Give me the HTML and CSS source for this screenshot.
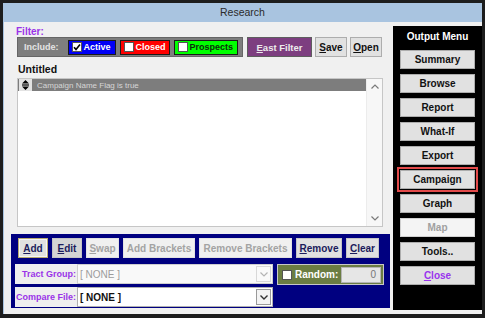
FILE: index.html
```html
<!DOCTYPE html>
<html lang="en">
<head>
    <meta charset="UTF-8">
    <meta name="viewport" content="width=device-width, initial-scale=1.0">
    <title>Research</title>
    <link rel="stylesheet" href="styles.css">
</head>
<body>
    <div class="window">
        <div class="titlebar">Research</div>

        <div class="frame">
            <div class="main">
                <div class="filter-label">Filter:</div>

                <div class="filter-row">
                    <div class="include">
                        <span class="include-label">Include:</span>
                        <span class="chip chip-active">
                            <span class="box">
                                <svg width="8" height="8" viewBox="0 0 8 8"><path d="M1 4.2 L3 6.4 L7 1.4" fill="none" stroke="#000" stroke-width="1.6"/></svg>
                            </span>Active
                        </span>
                        <span class="chip chip-closed"><span class="box"></span>Closed</span>
                        <span class="chip chip-prospects"><span class="box"></span>Prospects</span>
                    </div>
                    <button class="btn btn-fast"><u>E</u>ast Filter</button>
                    <button class="btn btn-small"><u>S</u>ave</button>
                    <button class="btn btn-small"><u>O</u>pen</button>
                </div>

                <div class="query-title">Untitled</div>

                <div class="query-list">
                    <div class="query-rows">
                        <div class="query-row">
                            <span class="move-icon">
                                <svg width="7" height="10" viewBox="0 0 7 10"><path d="M3.5 0 L7 3.5 L0 3.5 Z M0 6.5 L7 6.5 L3.5 10 Z" fill="#000"/><rect x="0" y="4.4" width="7" height="1.2" fill="#000"/></svg>
                            </span>
                            Campaign Name Flag is true
                        </div>
                    </div>
                    <div class="scrollbar">
                        <span class="scroll-btn">
                            <svg width="8" height="5" viewBox="0 0 8 5"><path d="M0.5 4.5 L4 1 L7.5 4.5" fill="none" stroke="#7a7a7a" stroke-width="1.2"/></svg>
                        </span>
                        <span class="scroll-btn">
                            <svg width="8" height="5" viewBox="0 0 8 5"><path d="M0.5 0.5 L4 4 L7.5 0.5" fill="none" stroke="#7a7a7a" stroke-width="1.2"/></svg>
                        </span>
                    </div>
                </div>

                <div class="toolbar">
                    <div class="tool-row">
                        <button class="tool-btn focused w-add"><u>A</u>dd</button>
                        <button class="tool-btn hot w-edit"><u>E</u>dit</button>
                        <button class="tool-btn off w-swap"><u>S</u>wap</button>
                        <button class="tool-btn off w-addb">Add Brackets</button>
                        <button class="tool-btn off w-remb">Remove Brackets</button>
                        <button class="tool-btn w-remove"><u>R</u>emove</button>
                        <button class="tool-btn w-clear"><u>C</u>lear</button>
                    </div>

                    <div class="combo-line">
                        <div class="combo">
                            <label>Tract Group:</label>
                            <div class="select">
                                <span class="select-text">[ NONE ]</span>
                                <span class="arrow">
                                    <svg width="8" height="5" viewBox="0 0 8 5"><path d="M0.5 0.5 L4 4 L7.5 0.5" fill="none" stroke="#b4b4b4" stroke-width="1.2"/></svg>
                                </span>
                            </div>
                        </div>
                        <div class="random">
                            <span class="box"></span>
                            <span>Random:</span>
                            <span class="random-input">0</span>
                        </div>
                    </div>

                    <div class="combo-line last">
                        <div class="combo">
                            <label>Compare File:</label>
                            <div class="select enabled">
                                <span class="select-text">[ NONE ]</span>
                                <span class="arrow">
                                    <svg width="8" height="5" viewBox="0 0 8 5"><path d="M0.5 0.5 L4 4 L7.5 0.5" fill="none" stroke="#333" stroke-width="1.4"/></svg>
                                </span>
                            </div>
                        </div>
                    </div>
                </div>
            </div>

            <div class="output-menu">
                <div class="menu-title">Output Menu</div>
                <div class="menu-list">
                    <button class="menu-btn">Summary</button>
                    <button class="menu-btn">Browse</button>
                    <button class="menu-btn">Report</button>
                    <button class="menu-btn">What-If</button>
                    <button class="menu-btn">Export</button>
                    <button class="menu-btn current">Campaign</button>
                    <button class="menu-btn">Graph</button>
                    <button class="menu-btn off">Map</button>
                    <button class="menu-btn">Tools..</button>
                    <button class="menu-btn close"><u>C</u>lose</button>
                </div>
            </div>
        </div>
    </div>
</body>
</html>
```

FILE: styles.css
```css
* {
    margin: 0;
    padding: 0;
    box-sizing: border-box;
}

body {
    width: 485px;
    height: 318px;
    overflow: hidden;
    background: #1d1d1d;
    font-family: "Liberation Sans", Arial, sans-serif;
}

button {
    font-family: inherit;
    font-weight: bold;
    font-size: 10px;
    cursor: pointer;
}

.window {
    margin: 3px 3px 0;
    height: 311px;
    background: #f0f0f0;
    display: flex;
    flex-direction: column;
}

.titlebar {
    height: 19px;
    line-height: 19px;
    background: #a9c4e0;
    text-align: center;
    font-size: 10.5px;
    color: #2b2b2b;
}

.frame {
    flex: 1;
    display: flex;
    padding: 4px 0 0 7px;
    border-left: 1px solid #a9c4e0;
}

.main {
    width: 379px;
    display: flex;
    flex-direction: column;
}

.filter-label {
    color: #9a33e8;
    font-weight: bold;
    font-size: 10px;
    line-height: 11px;
    margin-left: 5px;
}

/* filter bar */
.filter-row {
    display: flex;
    height: 20px;
    margin-left: 6px;
}

.include {
    width: 226px;
    display: flex;
    align-items: center;
    gap: 4px;
    background: #7e7e7e;
    border: 1px solid #666;
    padding-left: 6px;
}

.include-label {
    color: #e4e4e4;
    font-size: 9px;
    font-weight: bold;
    margin-right: 5px;
}

.chip {
    height: 15px;
    display: flex;
    align-items: center;
    gap: 2px;
    border: 1px solid #1a1a1a;
    padding-left: 3px;
    font-size: 9px;
    font-weight: bold;
    color: #fff;
}

.chip-active {
    width: 48px;
    background: #0000f5;
}

.chip-closed {
    width: 50px;
    background: #f00;
}

.chip-prospects {
    width: 64px;
    background: #00ff00;
    color: #0b2b0b;
}

.box {
    width: 10px;
    height: 10px;
    background: #fff;
    border: 1px solid #555;
    display: flex;
    align-items: center;
    justify-content: center;
}

.btn {
    height: 20px;
}

.btn-fast {
    margin-left: 4px;
    width: 65px;
    background: #7d3e80;
    border: 1px solid #5e5e5e;
    color: #ececec;
    font-size: 9.5px;
}

.btn-small {
    margin-left: 3px;
    width: 32px;
    background: #e1e1e1;
    border: 1px solid #adadad;
    color: #111;
}

/* query list */
.query-title {
    font-size: 10.5px;
    font-weight: bold;
    line-height: 12px;
    margin: 6px 0 0 7px;
    color: #111;
}

.query-list {
    margin: 3px 0 0 6px;
    width: 366px;
    height: 149px;
    border: 1px solid #c6c6c6;
    background: #fff;
    display: flex;
}

.query-rows {
    flex: 1;
}

.query-row {
    height: 12px;
    background: #7d7d7d;
    color: #d6d6d6;
    font-size: 8px;
    display: flex;
    align-items: center;
}

.move-icon {
    width: 13px;
    height: 12px;
    background: #e2e2e2;
    margin-left: 1px;
    margin-right: 5px;
    display: flex;
    align-items: center;
    justify-content: center;
}

.scrollbar {
    width: 16px;
    background: #f7f7f7;
    border-left: 1px solid #ececec;
    display: flex;
    flex-direction: column;
    justify-content: space-between;
}

.scroll-btn {
    height: 15px;
    display: flex;
    align-items: center;
    justify-content: center;
}

/* blue toolbar */
.toolbar {
    margin-top: 7px;
    height: 74px;
    background: #000080;
    padding-top: 4px;
}

.tool-row {
    display: flex;
    gap: 4px;
    height: 20px;
    padding-left: 7px;
}

.tool-btn {
    height: 20px;
    background: #e1e1e1;
    border: 1px solid #c4c4c4;
    color: #1c1c5c;
}

.tool-btn.focused {
    border-color: #b8ab72;
    box-shadow: inset 0 0 0 1px #f5f5f5;
}

.tool-btn.hot {
    background: #d4d4d4;
}

.tool-btn.off {
    background: #f0f0f0;
    border-color: #e2e2e2;
    color: #a3a3a3;
}

.w-add { width: 30px; }
.w-edit { width: 30px; }
.w-swap { width: 33px; }
.w-addb { width: 72px; }
.w-remb { width: 93px; }
.w-remove { width: 46px; }
.w-clear { width: 33px; }

.combo-line {
    display: flex;
    gap: 4px;
    margin-top: 6px;
    padding-left: 4px;
    height: 20px;
}

.combo-line.last {
    margin-top: 3px;
}

.combo {
    width: 258px;
    display: flex;
    background: #efefef;
}

.combo label {
    width: 62px;
    text-align: right;
    color: #9a33e8;
    font-size: 9px;
    font-weight: bold;
    line-height: 20px;
    padding-right: 1px;
}

.select {
    flex: 1;
    display: flex;
    align-items: center;
    border: 1px solid #cfcfcf;
    background: #f9f9f9;
    font-size: 10px;
    color: #9c9c9c;
    padding-left: 2px;
}

.select-text {
    flex: 1;
}

.select.enabled {
    background: #fff;
    color: #111;
    font-weight: bold;
    border-color: #b0b0b0;
}

.arrow {
    width: 15px;
    height: 16px;
    border: 1px solid #d8d8d8;
    margin-right: 1px;
    display: flex;
    align-items: center;
    justify-content: center;
}

.select.enabled .arrow {
    border-color: #9a9a9a;
    background: #f4f4f4;
}

.random {
    width: 107px;
    height: 21px;
    background: #6b7d43;
    border: 1px solid #c7c7c7;
    display: flex;
    align-items: center;
    gap: 3px;
    padding-left: 4px;
    color: #fff;
    font-weight: bold;
    font-size: 10px;
}

.random-input {
    margin-left: auto;
    margin-right: 2px;
    width: 40px;
    height: 16px;
    background: #e6e6e6;
    border: 1px solid #b5b5b5;
    color: #777;
    font-weight: normal;
    text-align: right;
    padding-right: 4px;
    line-height: 14px;
}

/* output menu */
.output-menu {
    margin-left: 3px;
    width: 89px;
    height: 284px;
    background: #000;
}

.menu-title {
    color: #fff;
    font-weight: bold;
    font-size: 10px;
    text-align: center;
    line-height: 12px;
    padding-top: 5px;
}

.menu-list {
    display: flex;
    flex-direction: column;
    gap: 5px;
    padding: 7px 0 0 7px;
}

.menu-btn {
    width: 75px;
    height: 19px;
    background: #e1e1e1;
    border: 1px solid #adadad;
    color: #111;
}

.menu-btn.current {
    outline: 2px solid #e24a4a;
    outline-offset: 1px;
}

.menu-btn.off {
    background: #f4f4f4;
    border-color: #d0d0d0;
    color: #a0a0a0;
}

.menu-btn.close {
    color: #9933ee;
}
```
